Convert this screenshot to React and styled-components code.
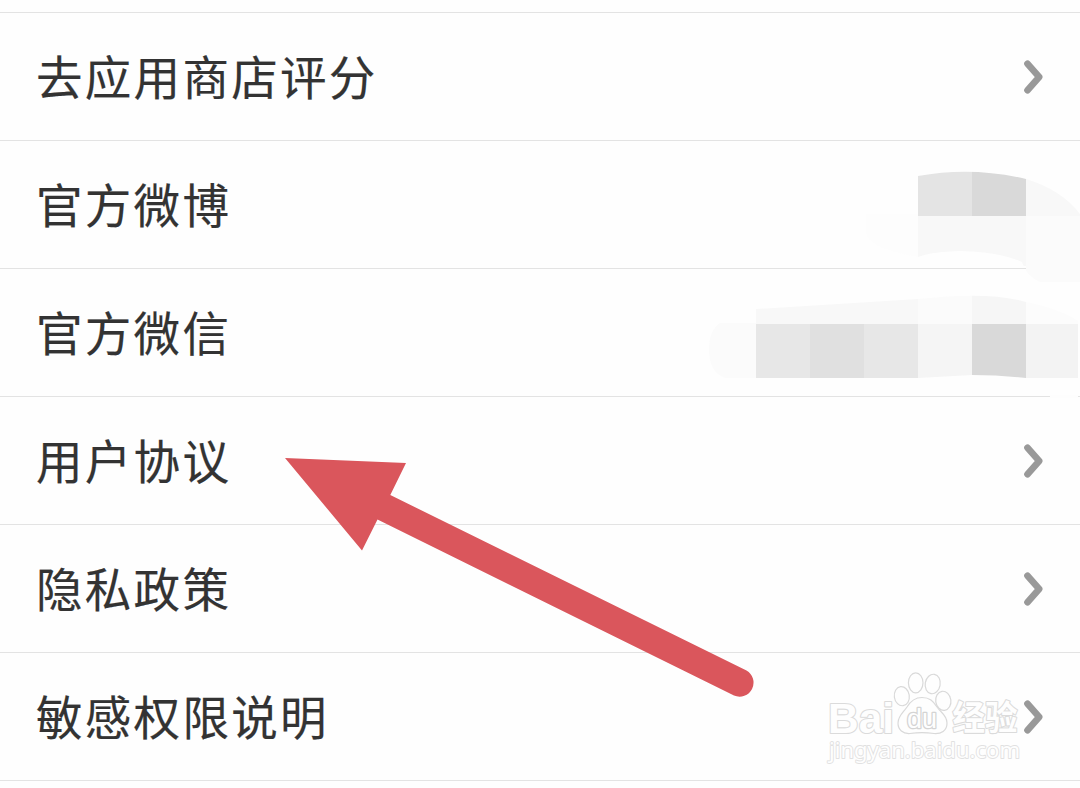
import React from 'react';
import styled, { createGlobalStyle } from 'styled-components';

const GlobalStyle = createGlobalStyle`
    * {
        box-sizing: border-box;
    }

    body {
        margin: 0;
        background: #fefefe;
        font-family: "Noto Sans CJK SC", sans-serif;
    }
`;

const Page = styled.div`
    position: relative;
    width: 1080px;
    height: 788px;
    overflow: hidden;
    background: #fefefe;
`;

const List = styled.ul`
    margin: 12px 0 0;
    padding: 0;
    list-style: none;
    border-top: 1px solid #e3e3e3;
`;

const Row = styled.li`
    display: flex;
    align-items: center;
    justify-content: space-between;
    height: 128px;
    padding: 0 36px 0 36px;
    border-bottom: 1px solid #e3e3e3;
`;

const Label = styled.span`
    padding-bottom: 3px;
    color: #333333;
    font-size: 46.5px;
    line-height: 72px;
    letter-spacing: 2.3px;
    white-space: nowrap;
    -webkit-text-stroke: 0.2px #333333;
`;

const Chevron = styled.svg`
    display: block;
    width: 22px;
    height: 36px;
    fill: none;
    stroke: #999999;
    stroke-width: 6.6;
    stroke-linecap: round;
    stroke-linejoin: round;
`;

const Mosaic = styled.svg`
    position: absolute;
    left: 700px;
    top: 160px;
    width: 380px;
    height: 245px;
`;

const Arrow = styled.svg`
    position: absolute;
    left: 280px;
    top: 450px;
    width: 480px;
    height: 255px;
    fill: #da565c;
`;

const Watermark = styled.svg`
    position: absolute;
    left: 820px;
    top: 664px;
    width: 210px;
    height: 110px;
    fill: #fefefe;
    stroke: #dadada;
    stroke-width: 2.2;
    stroke-linejoin: round;
    paint-order: stroke;
    opacity: 0.95;
    font-family: "Liberation Sans", "Noto Sans CJK SC", sans-serif;
`;

const items = [
    { id: 1, name: '去应用商店评分', link: true },
    { id: 2, name: '官方微博', link: false },
    { id: 3, name: '官方微信', link: false },
    { id: 4, name: '用户协议', link: true },
    { id: 5, name: '隐私政策', link: true },
    { id: 6, name: '敏感权限说明', link: true },
];

const AccountMosaic = () => (
    <Mosaic viewBox="700 160 380 245">
        <defs>
            <clipPath id="weibo">
                <path d="M866 214H918V176Q972 166 1026 179Q1062 190 1080 214V282H1040Q1026 276 1022 262Q1000 252 960 251Q930 252 918 257Q866 248 866 232Z" />
            </clipPath>
            <clipPath id="weixin">
                <path d="M720 323H756V309L918 299Q990 291 1026 302Q1060 309 1078 321V378H1026Q1000 375 972 375L918 378H725Q709 372 709 350Q709 330 720 323Z" />
            </clipPath>
        </defs>
        <g clipPath="url(#weibo)">
            <rect x="866" y="214" width="52" height="50" fill="#fdfdfd" />
            <rect x="918" y="164" width="54" height="52" fill="#e4e4e4" />
            <rect x="972" y="164" width="54" height="52" fill="#d9d9d9" />
            <rect x="1026" y="164" width="54" height="52" fill="#f8f8f8" />
            <rect x="918" y="216" width="108" height="50" fill="#f8f8f8" />
            <rect x="1026" y="216" width="54" height="68" fill="#fbfbfb" />
        </g>
        <g clipPath="url(#weixin)">
            <rect x="700" y="290" width="56" height="90" fill="#fbfbfb" />
            <rect x="756" y="290" width="162" height="34" fill="#f8f8f8" />
            <rect x="918" y="290" width="54" height="34" fill="#fbfbfb" />
            <rect x="972" y="290" width="54" height="34" fill="#f6f6f6" />
            <rect x="1026" y="290" width="54" height="34" fill="#fcfcfc" />
            <rect x="756" y="324" width="54" height="54" fill="#e7e7e7" />
            <rect x="810" y="324" width="54" height="54" fill="#e0e0e0" />
            <rect x="864" y="324" width="54" height="54" fill="#e7e7e7" />
            <rect x="918" y="324" width="54" height="54" fill="#f5f5f5" />
            <rect x="972" y="324" width="54" height="54" fill="#d9d9d9" />
            <rect x="1026" y="324" width="54" height="54" fill="#f3f3f3" />
        </g>
        <rect x="1050" y="395" width="28" height="3" fill="#fdfdfd" />
    </Mosaic>
);

const PointerArrow = () => (
    <Arrow viewBox="280 450 480 255">
        <path d="M285 458L406 463L390.3 495L746.5 670.5A14 14 0 0 1 734 695.5L377.5 519.5L362 550.5Z" />
    </Arrow>
);

const BaiduWatermark = () => (
    <Watermark viewBox="820 664 210 110">
        <text x="828" y="732.5" fontSize="43" fontWeight="700" textLength="66" lengthAdjust="spacingAndGlyphs">Bai</text>
        <g fill="none" strokeWidth="1.2" stroke="#d8d8d8">
            <ellipse cx="901.8" cy="696.2" rx="7.5" ry="9.6" transform="rotate(-8 901.8 696.2)" />
            <ellipse cx="915.7" cy="682.8" rx="7.3" ry="10" />
            <ellipse cx="932.7" cy="684" rx="7.5" ry="9.8" transform="rotate(10 932.7 684)" />
            <ellipse cx="943.3" cy="700.8" rx="7.6" ry="9.6" transform="rotate(-8 943.3 700.8)" />
            <path d="M922 697.5C914 697.5 910 702 907 707C903 713 898 716 898 723C898 730 903 734 910 733.5C917 732.5 927 732.5 934 733.5C941 734 947 731 947 723C947 715 941 713 937 707C933 701 930 697.5 922 697.5Z" />
        </g>
        <text x="907" y="727.5" fontSize="27" strokeWidth="2.6" stroke="#d2d2d2" textLength="30" lengthAdjust="spacingAndGlyphs">du</text>
        <text x="952.5" y="730" fontSize="34" fontWeight="700" fontFamily="Noto Sans CJK SC" textLength="65" lengthAdjust="spacingAndGlyphs">经验</text>
        <text x="829" y="758" fontSize="22" strokeWidth="1.8" stroke="#e0e0e0" fontFamily="Noto Sans" textLength="191" lengthAdjust="spacingAndGlyphs">jingyan.baidu.com</text>
    </Watermark>
);

const App = () => {
    return (
        <>
            <GlobalStyle />
            <Page>
                <List>
                    {items.map((item) => (
                        <Row key={item.id}>
                            <Label>{item.name}</Label>
                            {item.link && (
                                <Chevron viewBox="0 0 22 36">
                                    <path d="M5.5 4.8L17.2 18L5.5 31.2" />
                                </Chevron>
                            )}
                        </Row>
                    ))}
                </List>
                <AccountMosaic />
                <PointerArrow />
                <BaiduWatermark />
            </Page>
        </>
    );
};

export default App;
